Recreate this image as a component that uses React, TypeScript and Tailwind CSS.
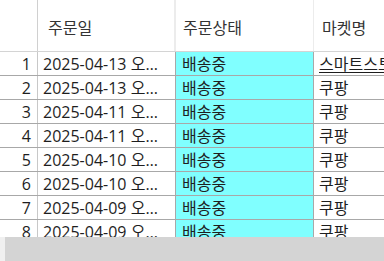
const rows = [
  { no: 1, date: "2025-04-13 오후 3:21:00", status: "배송중", market: "스마트스토어" },
  { no: 2, date: "2025-04-13 오후 1:05:12", status: "배송중", market: "쿠팡" },
  { no: 3, date: "2025-04-11 오후 5:40:33", status: "배송중", market: "쿠팡" },
  { no: 4, date: "2025-04-11 오전 9:12:08", status: "배송중", market: "쿠팡" },
  { no: 5, date: "2025-04-10 오후 4:02:51", status: "배송중", market: "쿠팡" },
  { no: 6, date: "2025-04-10 오전 11:30:17", status: "배송중", market: "쿠팡" },
  { no: 7, date: "2025-04-09 오후 2:44:45", status: "배송중", market: "쿠팡" },
  { no: 8, date: "2025-04-09 오전 10:18:29", status: "배송중", market: "쿠팡" },
];

const App = () => {
  return (
    <div
      className="w-[384px] h-[261px] overflow-hidden bg-white flex flex-col text-[16px] text-[#1e1e1e]"
      style={{ fontFamily: '"Open Sans", "Noto Sans CJK KR", sans-serif' }}
    >
      <div className="flex-1 overflow-hidden">
        <div className="flex h-[52px] border-b border-[#d4d4d4]">
          <div className="w-[38px] shrink-0 border-r border-[#d0d0d0]" />
          <div className="w-[138px] shrink-0 border-r-2 border-[#ececec] flex items-center pl-[10px] pt-[4px] text-[#333]">
            주문일
          </div>
          <div className="w-[138px] shrink-0 border-r border-[#ececec] flex items-center pl-[7px] pt-[4px] text-[#333]">
            주문상태
          </div>
          <div className="flex-1 flex items-center pl-[8px] pt-[4px] text-[#333]">마켓명</div>
        </div>
        {rows.map((r) => (
          <div key={r.no} className="flex h-[24px] border-b border-[#a8a8a8]">
            <div className="w-[38px] shrink-0 border-r border-[#c8c8c8] flex items-center justify-end pr-[6px] leading-none">
              {r.no}
            </div>
            <div className="w-[138px] shrink-0 border-r border-[#a8a8a8] flex items-center pl-[5px] pr-[6px] leading-none overflow-hidden">
              <span className="truncate">{r.date}</span>
            </div>
            <div className="w-[138px] shrink-0 border-r border-[#a8a8a8] bg-[#80ffff] flex items-center pl-[6px] leading-none">
              {r.status}
            </div>
            <div className="flex-1 flex items-center pl-[5px] leading-none whitespace-nowrap overflow-hidden">
              <span className={r.no === 1 ? "underline underline-offset-2" : ""}>{r.market}</span>
            </div>
          </div>
        ))}
      </div>
      <div className="h-[24px] shrink-0 flex">
        <div className="w-[5px] bg-[#f0f0f0]" />
        <div className="flex-1 bg-[#d4d4d4]" />
      </div>
    </div>
  );
};

export default App;
